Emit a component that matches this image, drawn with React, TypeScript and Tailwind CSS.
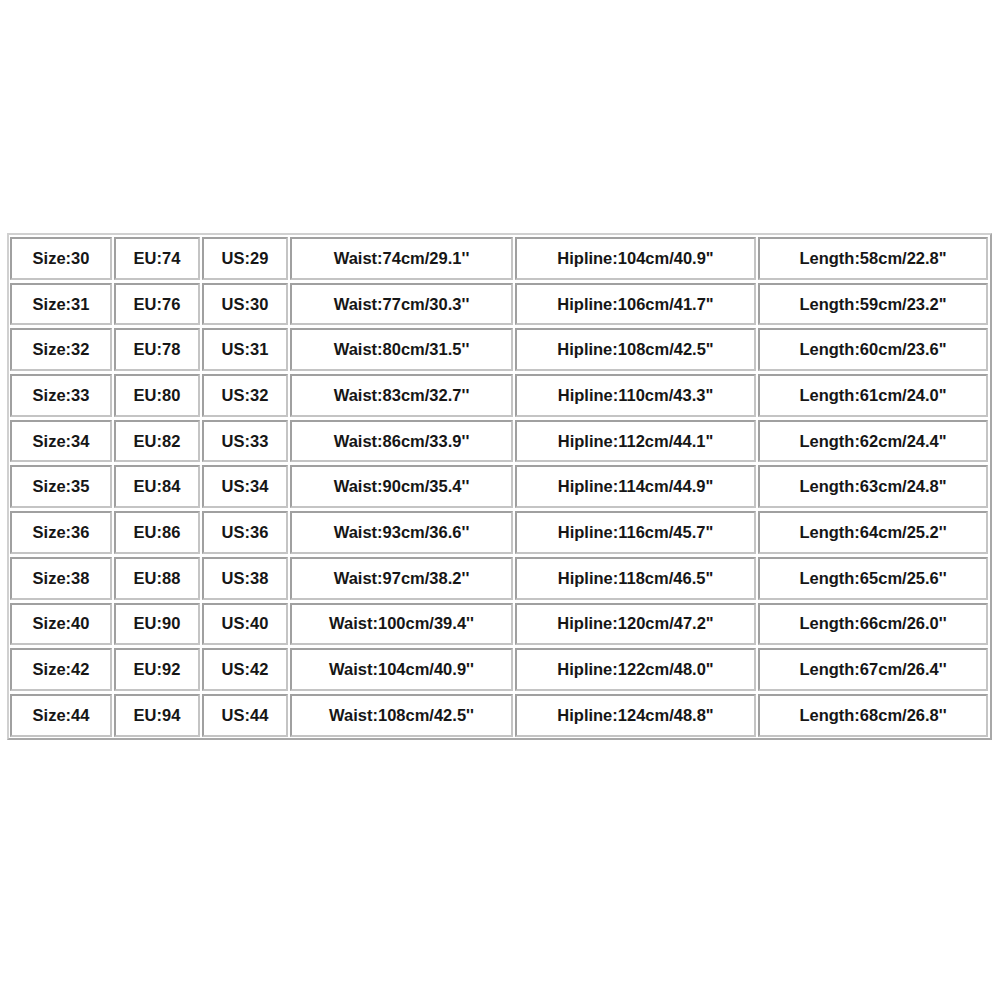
const rows = [
  ["Size:30", "EU:74", "US:29", "Waist:74cm/29.1''", 'Hipline:104cm/40.9"', 'Length:58cm/22.8"'],
  ["Size:31", "EU:76", "US:30", "Waist:77cm/30.3''", 'Hipline:106cm/41.7"', 'Length:59cm/23.2"'],
  ["Size:32", "EU:78", "US:31", "Waist:80cm/31.5''", 'Hipline:108cm/42.5"', 'Length:60cm/23.6"'],
  ["Size:33", "EU:80", "US:32", "Waist:83cm/32.7''", 'Hipline:110cm/43.3"', 'Length:61cm/24.0"'],
  ["Size:34", "EU:82", "US:33", "Waist:86cm/33.9''", 'Hipline:112cm/44.1"', 'Length:62cm/24.4"'],
  ["Size:35", "EU:84", "US:34", "Waist:90cm/35.4''", 'Hipline:114cm/44.9"', 'Length:63cm/24.8"'],
  ["Size:36", "EU:86", "US:36", "Waist:93cm/36.6''", 'Hipline:116cm/45.7"', "Length:64cm/25.2''"],
  ["Size:38", "EU:88", "US:38", "Waist:97cm/38.2''", 'Hipline:118cm/46.5"', "Length:65cm/25.6''"],
  ["Size:40", "EU:90", "US:40", "Waist:100cm/39.4''", 'Hipline:120cm/47.2"', "Length:66cm/26.0''"],
  ["Size:42", "EU:92", "US:42", "Waist:104cm/40.9''", 'Hipline:122cm/48.0"', "Length:67cm/26.4''"],
  ["Size:44", "EU:94", "US:44", "Waist:108cm/42.5''", 'Hipline:124cm/48.8"', "Length:68cm/26.8''"],
];

export default function App() {
  return (
    <div className="w-[1000px] h-[1000px] bg-white pt-[233px] pl-[7px] font-['Liberation_Sans',Arial,sans-serif]">
      <div className="w-[985px] border-2 border-t-[#d0d0d0] border-l-[#d0d0d0] border-b-[#a8a8a8] border-r-[#a8a8a8] pt-[2px] pl-[1px] pb-[1px]">
        <div className="grid grid-cols-[102px_86px_86px_223px_241px_230px] gap-x-[2px] gap-y-[3px]">
          {rows.map((row, i) =>
            row.map((cell, j) => (
              <div
                key={i + "-" + j}
                className="h-[42.7px] flex items-center justify-center border-2 border-t-[#a0a0a0] border-l-[#a0a0a0] border-b-[#c4c4c4] border-r-[#c4c4c4] text-[16.5px] font-bold text-[#161616]"
              >
                {cell}
              </div>
            ))
          )}
        </div>
      </div>
    </div>
  );
}
